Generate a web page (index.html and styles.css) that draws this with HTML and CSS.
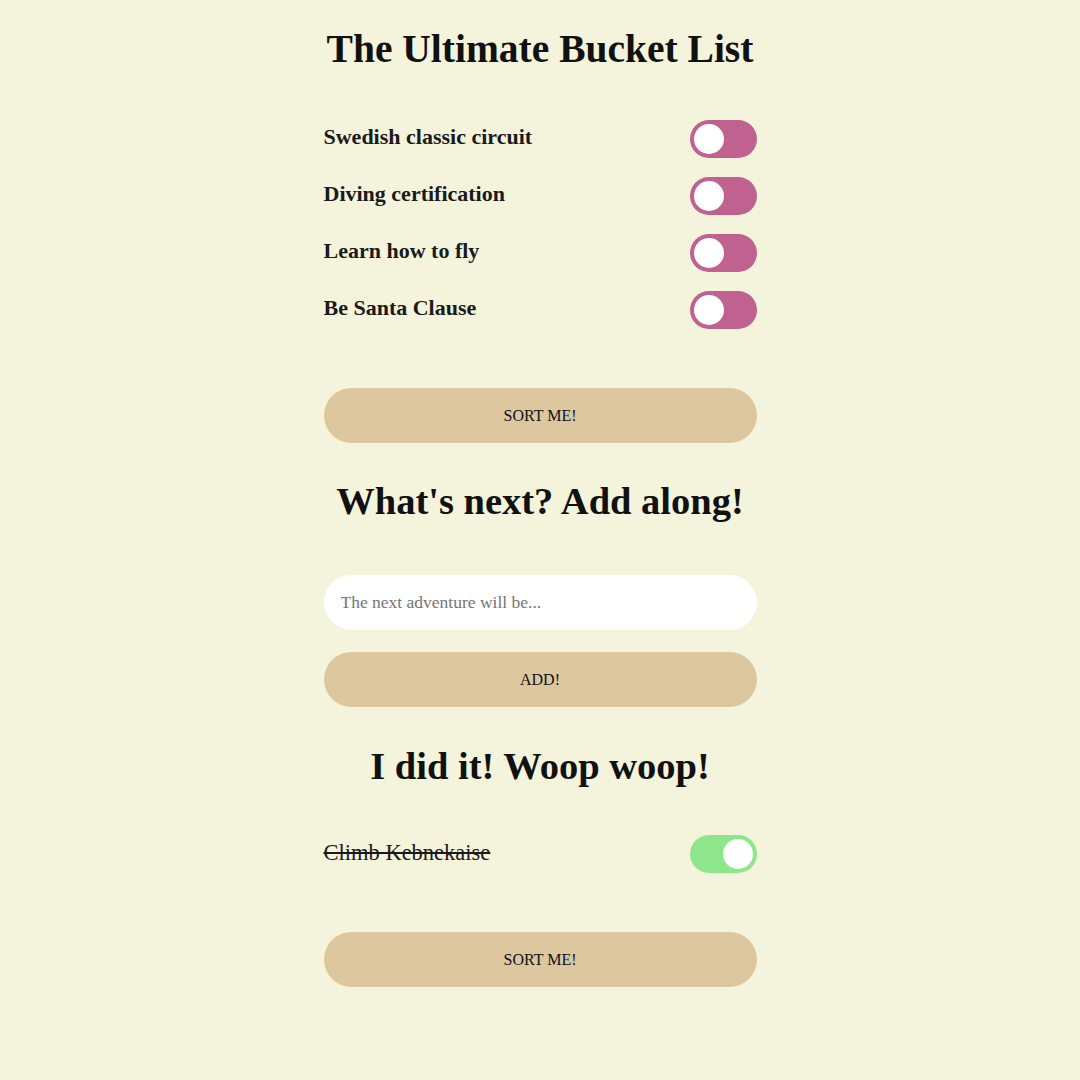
FILE: index.html
```html
<!DOCTYPE html>
<html>
<head>
<meta charset="utf-8">
<link rel="stylesheet" href="styles.css">
</head>
<body>
<main class="app">
  <h1 class="title">The Ultimate Bucket List</h1>
  <ul class="list">
    <li class="item"><span class="label">Swedish classic circuit</span><span class="toggle"><span class="knob"></span></span></li>
    <li class="item"><span class="label">Diving certification</span><span class="toggle"><span class="knob"></span></span></li>
    <li class="item"><span class="label">Learn how to fly</span><span class="toggle"><span class="knob"></span></span></li>
    <li class="item"><span class="label">Be Santa Clause</span><span class="toggle"><span class="knob"></span></span></li>
  </ul>
  <button class="btn btn-sort1">SORT ME!</button>
  <h2 class="heading heading-next">What's next? Add along!</h2>
  <input class="input" type="text" placeholder="The next adventure will be...">
  <button class="btn btn-add">ADD!</button>
  <h2 class="heading heading-done">I did it! Woop woop!</h2>
  <ul class="list list-done">
    <li class="item"><span class="label done">Climb Kebnekaise</span><span class="toggle on"><span class="knob"></span></span></li>
  </ul>
  <button class="btn btn-sort2">SORT ME!</button>
</main>
</body>
</html>
```
FILE: styles.css
```css
html, body {
  margin: 0;
  padding: 0;
  background: #f4f4dc;
}
body {
  font-family: "Liberation Serif", "DejaVu Serif", serif;
  color: #111;
}
.app {
  width: 433px;
  margin: 0 auto;
  display: flex;
  flex-direction: column;
  padding-top: 26px;
}
.title {
  margin: 0;
  font-size: 39.5px;
  line-height: 46px;
  font-weight: bold;
  text-align: center;
  white-space: nowrap;
}
.list {
  list-style: none;
  margin: 0;
  padding: 0;
  margin-top: 48px;
  display: flex;
  flex-direction: column;
  gap: 19px;
}
.item {
  display: flex;
  align-items: center;
  justify-content: space-between;
  height: 38px;
}
.label {
  font-size: 22px;
  font-weight: bold;
  color: #1a1a1a;
  margin-bottom: 5px;
}
.label.done {
  font-weight: normal;
  font-size: 22.5px;
  margin-bottom: 3px;
  text-decoration: line-through;
  text-decoration-thickness: 1.5px;
}
.toggle {
  width: 67px;
  height: 38px;
  border-radius: 19px;
  background: #c0628f;
  display: flex;
  align-items: center;
  padding: 0 4px;
  box-sizing: border-box;
}
.toggle.on {
  background: #8ee68a;
  justify-content: flex-end;
}
.knob {
  width: 30px;
  height: 30px;
  border-radius: 50%;
  background: #fff;
}
.btn {
  display: block;
  width: 100%;
  height: 55px;
  border: none;
  border-radius: 28px;
  background: #dcc79f;
  font-family: "Liberation Serif", serif;
  font-size: 16px;
  color: #111;
  padding: 0 0 0 0;
}
.btn-sort1 { margin-top: 59px; }
.heading {
  margin: 0;
  font-size: 38.5px;
  font-weight: bold;
  line-height: 46px;
  text-align: center;
  white-space: nowrap;
}
.heading-next { margin-top: 35px; }
.input {
  margin-top: 51px;
  height: 55px;
  border: none;
  border-radius: 28px;
  background: #fff;
  padding: 0 17px;
  font-family: "Liberation Serif", serif;
  font-size: 17.5px;
  box-sizing: border-box;
  width: 100%;
  outline: none;
}
.input::placeholder { color: #757575; }
.btn-add { margin-top: 22px; }
.heading-done { margin-top: 36px; }
.list-done { margin-top: 46px; }
.btn-sort2 { margin-top: 59px; }
```
